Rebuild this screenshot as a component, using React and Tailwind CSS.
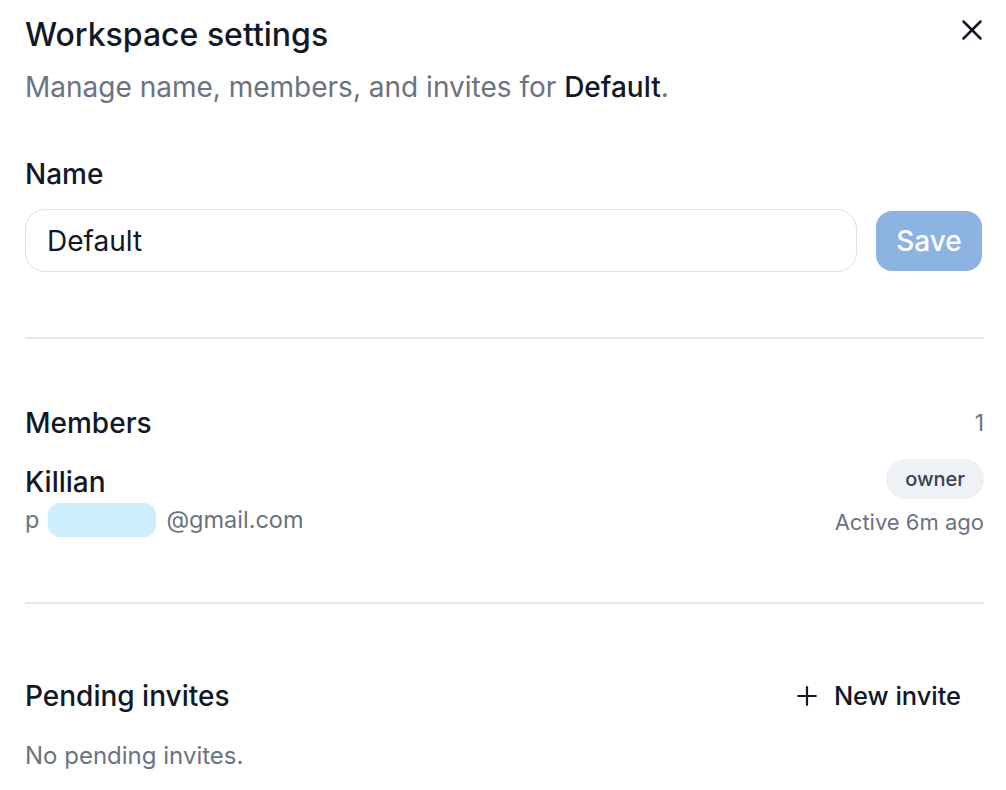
export default function App() {
  return (
    <div className="min-h-[790px] w-full bg-white font-['Inter','Noto_Sans',sans-serif] text-[#111827]">
      <div className="flex flex-col pl-[25px] pr-[22px] pt-[17px]">
        <div className="flex items-start justify-between">
          <h1 className="text-[32px] leading-[36px] font-medium">Workspace settings</h1>
          <button className="mr-[2px] mt-[3px] flex items-center justify-center">
            <svg width="20" height="20" viewBox="0 0 20 20" fill="none" stroke="#111827" strokeWidth="2.5" strokeLinecap="round">
              <line x1="1.5" y1="1.5" x2="18.5" y2="18.5" />
              <line x1="18.5" y1="1.5" x2="1.5" y2="18.5" />
            </svg>
          </button>
        </div>
        <p className="mt-[18px] text-[28px] leading-[32px] text-[#6b7280]">
          Manage name, members, and invites for <span className="font-medium text-[#111827]">Default</span>.
        </p>

        <div className="mt-[55px] text-[28px] leading-[32px] font-medium">Name</div>
        <div className="mt-[19px] flex items-center gap-[19px]">
          <div className="flex h-[63px] flex-1 items-center rounded-[20px] border-[1.5px] border-[#dde1e6] px-[21px] text-[28px]">
            Default
          </div>
          <button className="mr-[2px] h-[60px] w-[106px] rounded-[16px] bg-[#8db3e3] text-[28px] font-medium text-white">
            Save
          </button>
        </div>

        <div className="mt-[65px] h-[2px] w-full bg-[#e5e7eb]" />

        <div className="mt-[68px] flex items-center justify-between">
          <span className="text-[28px] leading-[32px] font-medium">Members</span>
          <span className="text-[23px] leading-[32px] text-[#6b7280]">1</span>
        </div>

        <div className="mt-[20px] flex items-start justify-between">
          <div className="flex flex-col pt-[7px]">
            <span className="text-[28px] leading-[32px] font-medium">Killian</span>
            <div className="mt-[5px] flex items-center text-[23.5px] leading-[28px] text-[#6b7280]">
              <span>p</span>
              <span className="ml-[9px] mr-[10px] h-[34px] w-[108px] rounded-[12px] bg-[#cdeffd]" />
              <span>@gmail.com</span>
            </div>
          </div>
          <div className="flex flex-col items-end">
            <span className="flex h-[40px] items-center rounded-full bg-[#eef1f5] px-[19px] text-[20px] font-medium text-[#374151]">
              owner
            </span>
            <span className="mt-[9px] text-[22px] leading-[28px] text-[#6b7280]">Active 6m ago</span>
          </div>
        </div>

        <div className="mt-[65px] h-[2px] w-full bg-[#e5e7eb]" />

        <div className="mt-[76px] flex items-center justify-between">
          <span className="text-[28px] leading-[32px] font-medium">Pending invites</span>
          <button className="mr-[23px] flex items-center gap-[17px] text-[25.4px] leading-[32px] font-medium">
            <svg width="20" height="20" viewBox="0 0 20 20" fill="none" stroke="#111827" strokeWidth="2.2" strokeLinecap="round">
              <line x1="10" y1="1.2" x2="10" y2="18.8" />
              <line x1="1.2" y1="10" x2="18.8" y2="10" />
            </svg>
            New invite
          </button>
        </div>
        <p className="mt-[30px] text-[24px] leading-[28px] text-[#6b7280]">No pending invites.</p>
      </div>
    </div>
  );
}
